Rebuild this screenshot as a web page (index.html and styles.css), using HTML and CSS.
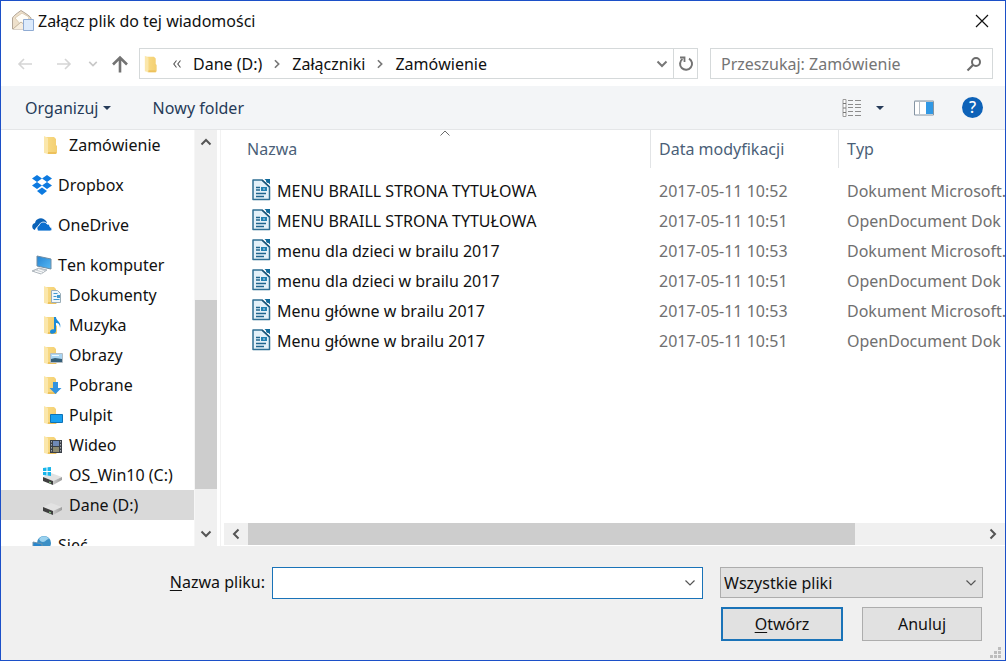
FILE: index.html
```html
<!DOCTYPE html>
<html lang="pl">
<head>
<meta charset="utf-8">
<title>Załącz plik do tej wiadomości</title>
<link rel="stylesheet" href="styles.css">
</head>
<body>
<svg class="defs" aria-hidden="true">
  <defs>
    <linearGradient id="gold" x1="0" x2="1" y1="0" y2="0"><stop offset="0" stop-color="#f9dc87"/><stop offset="1" stop-color="#f3cf72"/></linearGradient>
    <linearGradient id="screen" x1="0" x2="1" y1="0" y2="1"><stop offset="0" stop-color="#2583d2"/><stop offset="1" stop-color="#55b9f5"/></linearGradient>
    <linearGradient id="metal" x1="0" x2="1" y1="0" y2="0"><stop offset="0" stop-color="#c9c9c9"/><stop offset="1" stop-color="#9c9c9c"/></linearGradient>
  </defs>
  <symbol id="folder" viewBox="0 0 22 22">
    <path d="M3 3h9l2 2v6l1 1v7l-1 1H5z" fill="url(#gold)"/>
    <path d="M2 2l4 2v16l-4-1z" fill="#fbe7ab"/>
    <path d="M6 18h8v2H6z" fill="#edc15c"/>
  </symbol>
  <symbol id="drive" viewBox="0 0 22 22">
    <path d="M1 13l8-4 11 4-9 4z" fill="#e2e2e2"/>
    <path d="M1 13l10 4v4L1 17z" fill="#3f3f3f"/>
    <path d="M11 17l9-4v3l-9 5z" fill="url(#metal)"/>
    <path d="M7 18l2 1" stroke="#8fdc8f" stroke-width="1"/>
  </symbol>
  <symbol id="doc" viewBox="0 0 20 24">
    <path d="M2 1h9l7.500 7v12.500H2z" fill="#e3f1f9" stroke="#2f6f94" stroke-width="1.500" stroke-linejoin="round"/>
    <path d="M11 1l7.500 7" stroke="#1c5578" stroke-width="1.500"/>
    <path d="M13.500 0H19v5.500z" fill="#116a9b"/><circle cx="17" cy="2" r="2" fill="#116a9b"/>
    <path d="M5 8.500h4M5 11h4M5 14.500h10M5 17.500h8" stroke="#1f658e" stroke-width="1.300"/>
    <path d="M10 8h6v4h-6z" fill="#2480b0"/><path d="M12 10h2" stroke="#b5dcee"/>
  </symbol>
  <symbol id="chev-down" viewBox="0 0 12 12"><path d="M1.500 3.500L6 8l4.500-4.500" fill="none" stroke="currentColor" stroke-width="2"/></symbol>
  <symbol id="chev-thin" viewBox="0 0 12 12"><path d="M1.500 3.500L6 8l4.500-4.500" fill="none" stroke="currentColor" stroke-width="1.200"/></symbol>
  <symbol id="chev-up" viewBox="0 0 12 12"><path d="M1.500 8.500L6 4l4.500 4.500" fill="none" stroke="currentColor" stroke-width="2"/></symbol>
  <symbol id="chev-left" viewBox="0 0 12 12"><path d="M8.500 1.500L4 6l4.500 4.500" fill="none" stroke="currentColor" stroke-width="2"/></symbol>
  <symbol id="chev-right" viewBox="0 0 12 12"><path d="M3.500 1.500L8 6l-4.500 4.500" fill="none" stroke="currentColor" stroke-width="2"/></symbol>
</svg>

<div class="window">
  <header class="titlebar">
    <svg class="app-icon" viewBox="0 0 24 24" aria-hidden="true">
      <path d="M1.500 9Q2 7 10 1.500 19 7 20 9v11H1.500z" fill="#eee0cb" stroke="#b3a698"/>
      <path d="M4 9l7-5 7 4-1 5-7 3z" fill="#fffdf8" stroke="#dccdb5"/>
      <path d="M2 20l8-7 9 7" fill="#f7eee0" stroke="#c4b49c"/>
      <path d="M12.500 10.500h10v11h-10z" fill="#dceafb" stroke="#8fabd3"/>
    </svg>
    <h1 class="title">Załącz plik do tej wiadomości</h1>
    <button class="plain close" type="button" aria-label="Zamknij"><svg width="14" height="14" viewBox="0 0 14 14"><path d="M1 1l12 12M13 1L1 13" stroke="#111" stroke-width="1.200"/></svg></button>
  </header>

  <nav class="navbar" aria-label="Nawigacja">
    <div class="history">
      <button class="plain" type="button" aria-label="Wstecz" disabled><svg width="16" height="14" viewBox="0 0 16 14"><path d="M15 7H2M7 2L2 7l5 5" fill="none" stroke="#d5d5d5" stroke-width="1.600"/></svg></button>
      <button class="plain" type="button" aria-label="Dalej" disabled><svg width="16" height="14" viewBox="0 0 16 14"><path d="M1 7h13M9 2l5 5-5 5" fill="none" stroke="#d5d5d5" stroke-width="1.600"/></svg></button>
      <button class="plain recent" type="button" aria-label="Ostatnie lokalizacje"><svg width="10" height="10"><use href="#chev-down"/></svg></button>
      <button class="plain" type="button" aria-label="W górę"><svg width="18" height="18" viewBox="0 0 18 18"><path d="M9 17.500V3M2 9.500L9 2.500l7 7" fill="none" stroke="#737373" stroke-width="2.600"/></svg></button>
    </div>
    <div class="address">
      <svg class="icon" aria-hidden="true"><use href="#folder"/></svg>
      <button class="plain more" type="button" aria-label="Wcześniejsze foldery"><svg width="8" height="8" viewBox="0 0 8 8"><path d="M3.500 .5L.8 4l2.700 3.500M7.500 .5L4.800 4l2.700 3.500" fill="none" stroke="#555" stroke-width="1.100"/></svg></button>
      <a class="crumb" href="#">Dane (D:)</a>
      <svg class="sep" aria-hidden="true"><use href="#chev-right"/></svg>
      <a class="crumb" href="#">Załączniki</a>
      <svg class="sep" aria-hidden="true"><use href="#chev-right"/></svg>
      <a class="crumb" href="#">Zamówienie</a>
      <button class="plain expand" type="button" aria-label="Poprzednie lokalizacje"><svg width="12" height="12"><use href="#chev-down"/></svg></button>
      <button class="plain refresh" type="button" aria-label="Odśwież"><svg width="16" height="16" viewBox="0 0 16 16"><path d="M11 2.600a6 6 0 1 1-6.500.4" fill="none" stroke="#737373" stroke-width="2"/><path d="M2 1.500h4.500V6" fill="none" stroke="#737373" stroke-width="1.800"/></svg></button>
    </div>
    <div class="search">
      <input class="search-input" type="search" placeholder="Przeszukaj: Zamówienie" aria-label="Przeszukaj: Zamówienie">
      <svg width="16" height="16" viewBox="0 0 16 16" aria-hidden="true"><circle cx="10" cy="6" r="4" fill="none" stroke="#6b6b6b" stroke-width="2"/><path d="M7 9l-5.500 5.500" stroke="#6b6b6b" stroke-width="2.200"/></svg>
    </div>
  </nav>

  <div class="toolbar">
    <button class="plain tool" type="button">Organizuj <svg width="8" height="4" viewBox="0 0 8 4"><path d="M0 0h8L4 4z" fill="currentColor"/></svg></button>
    <button class="plain tool" type="button">Nowy folder</button>
    <div class="tool-right">
      <button class="plain view" type="button" aria-label="Zmień widok"><svg width="20" height="18" viewBox="0 0 20 18"><path d="M1 .5h3v17H1z" fill="#fff" stroke="#9b9b9b"/><path d="M1 4.500h3M1 9h3M1 13.500h3" stroke="#777"/><path d="M6 1.500h5M13 1.500h6M6 5.500h5M13 5.500h6M6 8.500h5M13 8.500h6M6 12.500h5M13 12.500h6M6 16.500h5M13 16.500h6" stroke="#8c8c8c"/></svg></button>
      <button class="plain view-more" type="button" aria-label="Więcej opcji"><svg width="8" height="4" viewBox="0 0 8 4"><path d="M0 0h8L4 4z" fill="currentColor"/></svg></button>
      <button class="plain pane" type="button" aria-label="Okienko podglądu"><svg width="20" height="16" viewBox="0 0 20 16"><path d="M.5 1h19v14H.5z" fill="#fff" stroke="#8494a3"/><path d="M12 2h7v12h-7z" fill="#3098e4"/><path d="M5.500 2v12M.5 1.500h19" stroke="#b3bcc4"/></svg></button>
      <button class="help" type="button" aria-label="Pomoc">?</button>
    </div>
  </div>

  <main class="main">
    <aside class="sidebar">
      <div class="tree">
        <ul class="group">
          <li class="node child"><svg class="icon"><use href="#folder"/></svg>Zamówienie</li>
        </ul>
        <ul class="group">
          <li class="node"><svg class="icon" viewBox="0 0 22 22"><g fill="#0d7ae0"><path d="M6 1l5 3.500-5 3.500-5-3.500zM16 1l5 3.500-5 3.500-5-3.500zM6 8l5 3.500-5 3.500-5-3.500zM16 8l5 3.500-5 3.500-5-3.500z"/><path d="M6 17l5-3.500 5 3.500-5 4z"/></g></svg>Dropbox</li>
        </ul>
        <ul class="group">
          <li class="node"><svg class="icon" viewBox="0 0 22 22"><path d="M4 16a3.600 3.600 0 0 1 0-7 6 6 0 0 1 10-3 5 5 0 0 1 2 3c-6-2-9 2-9 4-2 0-3 2-3 3z" fill="#0a62b8"/><path d="M7.500 17a3 3 0 0 1 .5-5.500c1-4 6.500-4.500 8-1.500 2.500 0 3 2 3 3 3 1 2 4 0 4z" fill="#0b6fd0" stroke="#fff" stroke-width=".8"/></svg>OneDrive</li>
        </ul>
        <ul class="group">
          <li class="node"><svg class="icon" viewBox="0 0 22 22"><path d="M6 2l14 3v10L6 12z" fill="url(#screen)" stroke="#6f8ca3"/><path d="M1 17l7-3 8 2-6 4z" fill="#ccd2d7" stroke="#b0b8be"/><path d="M4 17l7 2M7 15.500l6 2" stroke="#fff"/></svg>Ten komputer</li>
          <li class="node child"><svg class="icon" viewBox="0 0 22 22"><use href="#folder"/><path d="M9.500 6.500h6l3 3v9h-9z" fill="#edf6fb" stroke="#9aaeb9"/><path d="M11.500 9.500h4M11.500 12.500h3M11.500 15.500h6" stroke="#3f98ce"/><path d="M15 11h3v3h-3z" fill="#3f98ce"/></svg>Dokumenty</li>
          <li class="node child"><svg class="icon" viewBox="0 0 22 22"><use href="#folder"/><path d="M12 3h2c0 4 6 5 4 11 0-4-2-5-4-5v8c0 3-6 4-6 1 0-2 2-3 4-2.500z" fill="#1a8ad8"/></svg>Muzyka</li>
          <li class="node child"><svg class="icon" viewBox="0 0 22 22"><use href="#folder"/><path d="M8.500 9.500h12v9h-12z" fill="#a9d5f3" stroke="#b4bcc2"/><path d="M9 15l4-1 7 1v3H9z" fill="#355f79"/><path d="M10 11.500h7" stroke="#eff8ff"/></svg>Obrazy</li>
          <li class="node child"><svg class="icon" viewBox="0 0 22 22"><use href="#folder"/><path d="M11 8h5v6h3.500l-6 6-6-6H11z" fill="#3293e0"/></svg>Pobrane</li>
          <li class="node child"><svg class="icon" viewBox="0 0 22 22"><use href="#folder"/><path d="M8.500 10.500h12v8h-12z" fill="#18a0f0" stroke="#0c73b8"/></svg>Pulpit</li>
          <li class="node child"><svg class="icon" viewBox="0 0 22 22"><use href="#folder"/><path d="M8 6h12v13H8z" fill="#3b4048"/><path d="M11 7h6v5h-6z" fill="#6f89b8"/><path d="M11 13h6v5h-6z" fill="#8c8a72"/><path d="M9.500 7v12M18.500 7v12" stroke="#a5aab0" stroke-dasharray="1.500 1.500"/></svg>Wideo</li>
          <li class="node child"><svg class="icon" viewBox="0 0 22 22"><use href="#drive"/><path d="M1 4l3.500-.5V7H1zM5.500 3.300L9 3v4H5.500zM1 8h3.500v3.500L1 11zM5.500 8H9v4l-3.500-.4z" fill="#18b5ea"/></svg>OS_Win10 (C:)</li>
          <li class="node child selected"><svg class="icon"><use href="#drive"/></svg>Dane (D:)</li>
        </ul>
        <ul class="group">
          <li class="node"><svg class="icon" viewBox="0 0 22 22"><circle cx="13" cy="9" r="7" fill="#3c8fc5"/><path d="M8 5c3-4 8-3 10 0-3 0-3 3-6 3-2 0-3-1-4-3z" fill="#9bd2ef"/><path d="M2 8l9 2v9l-9-3z" fill="#2786ce" stroke="#7293aa"/></svg>Sieć</li>
        </ul>
      </div>
      <div class="vscroll">
        <button class="plain arrow" type="button" aria-label="Przewiń w górę"><svg width="12" height="12"><use href="#chev-up"/></svg></button>
        <div class="vtrack"><div class="vthumb"></div></div>
        <button class="plain arrow" type="button" aria-label="Przewiń w dół"><svg width="12" height="12"><use href="#chev-down"/></svg></button>
      </div>
    </aside>

    <section class="files">
      <div class="table-area">
        <svg class="sort" viewBox="0 0 10 6" aria-hidden="true"><path d="M.5 5.500L5 1l4.500 4.500" fill="none" stroke="#6b6b6b"/></svg>
        <table class="table">
          <thead>
            <tr><th class="col-name" scope="col">Nazwa</th><th class="col-date" scope="col">Data modyfikacji</th><th scope="col">Typ</th></tr>
          </thead>
          <tbody>
            <tr><td><span class="file"><svg class="doc"><use href="#doc"/></svg>MENU BRAILL STRONA TYTUŁOWA</span></td><td>2017-05-11 10:52</td><td>Dokument Microsoft.</td></tr>
            <tr><td><span class="file"><svg class="doc"><use href="#doc"/></svg>MENU BRAILL STRONA TYTUŁOWA</span></td><td>2017-05-11 10:51</td><td>OpenDocument Dok</td></tr>
            <tr><td><span class="file"><svg class="doc"><use href="#doc"/></svg>menu dla dzieci w brailu 2017</span></td><td>2017-05-11 10:53</td><td>Dokument Microsoft.</td></tr>
            <tr><td><span class="file"><svg class="doc"><use href="#doc"/></svg>menu dla dzieci w brailu 2017</span></td><td>2017-05-11 10:51</td><td>OpenDocument Dok</td></tr>
            <tr><td><span class="file"><svg class="doc"><use href="#doc"/></svg>Menu główne w brailu 2017</span></td><td>2017-05-11 10:53</td><td>Dokument Microsoft.</td></tr>
            <tr><td><span class="file"><svg class="doc"><use href="#doc"/></svg>Menu główne w brailu 2017</span></td><td>2017-05-11 10:51</td><td>OpenDocument Dok</td></tr>
          </tbody>
        </table>
      </div>
      <div class="hscroll">
        <button class="plain arrow" type="button" aria-label="Przewiń w lewo"><svg width="12" height="12"><use href="#chev-left"/></svg></button>
        <div class="htrack"><div class="hthumb"></div></div>
        <button class="plain arrow" type="button" aria-label="Przewiń w prawo"><svg width="12" height="12"><use href="#chev-right"/></svg></button>
      </div>
    </section>
  </main>

  <footer class="footer">
    <label class="name-label" for="filename"><u>N</u>azwa pliku:</label>
    <div class="combo">
      <input class="combo-input" id="filename" type="text">
      <button class="plain combo-button" type="button" aria-label="Poprzednie nazwy"><svg width="12" height="12"><use href="#chev-thin"/></svg></button>
    </div>
    <div class="filter">
      <select class="filter-select" aria-label="Typ pliku"><option>Wszystkie pliki</option></select>
      <svg class="filter-chevron" aria-hidden="true"><use href="#chev-thin"/></svg>
    </div>
    <div class="actions">
      <button class="button primary" type="button"><u>O</u>twórz</button>
      <button class="button" type="button">Anuluj</button>
    </div>
    <svg class="grip" viewBox="0 0 12 12" aria-hidden="true"><path d="M8 0h3v3H8zM4 4h3v3H4zM8 4h3v3H8zM0 8h3v3H0zM4 8h3v3H4zM8 8h3v3H8z" fill="#bdbdbd"/></svg>
  </footer>
</div>
</body>
</html>
```
FILE: styles.css
```css
* { box-sizing: border-box; }

body {
  margin: 0;
  font: 16px/30px "Noto Sans", "Open Sans", sans-serif;
  font-kerning: none;
  color: #111;
}

button, input, select { font: inherit; font-kerning: inherit; color: inherit; }
svg { display: block; flex: none; }
ul { list-style: none; margin: 0; padding: 0; }
u { text-underline-offset: 2px; }

.defs { position: absolute; width: 0; height: 0; }

.plain {
  display: flex;
  align-items: center;
  justify-content: center;
  padding: 0;
  border: 0;
  background: none;
}

.window {
  display: flex;
  flex-direction: column;
  height: 100vh;
  border: 1px solid #1c50c8;
  background: #fff;
  overflow: hidden;
}

/* Title bar */
.titlebar {
  display: flex;
  align-items: center;
  gap: 3px;
  height: 40px;
  padding: 0 16px 0 10px;
}
.app-icon { width: 24px; height: 24px; }
.title { flex: 1; margin: 0; font-size: 16px; font-weight: 400; }

/* Navigation */
.navbar {
  display: flex;
  gap: 12px;
  padding: 7px 12px 7px 16px;
}
.history { display: flex; align-items: center; gap: 23px; width: 110px; }
.history .recent { color: #c8c8c8; margin: 0 -10px 0 -7px; }
.address {
  display: flex;
  align-items: center;
  flex: 1;
  height: 31px;
  border: 1px solid #d5d9da;
  line-height: 28px;
}
.address .icon { margin-left: 3px; width: 20px; height: 20px; }
.more { width: 28px; }
.crumb { color: inherit; text-decoration: none; white-space: nowrap; }
.address .crumb:first-of-type { margin-left: 2px; }
.sep { width: 10px; height: 10px; margin: 0 10px; color: #777; }
.expand { margin-left: auto; color: #777; }
.refresh {
  width: 24px;
  height: 29px;
  margin-left: 5px;
  border-left: 1px solid #d5d9da;
}
.search {
  display: flex;
  align-items: center;
  width: 283px;
  height: 31px;
  padding: 0 10px;
  border: 1px solid #d5d9da;
}
.search-input {
  flex: 1;
  min-width: 0;
  padding: 0;
  border: 0;
  outline: 0;
  background: none;
}
.search-input::placeholder { color: #757575; opacity: 1; }

/* Toolbar */
.toolbar {
  display: flex;
  align-items: center;
  gap: 41px;
  height: 44px;
  padding: 0 22px 0 24px;
  border-bottom: 1px solid #e4e6e8;
  background: #f3f5f7;
  color: #263b59;
}
.tool { gap: 5px; }
.tool-right { display: flex; align-items: center; margin-left: auto; }
.view-more { margin: 0 30px 0 14px; }
.pane { margin-right: 28px; }
.help {
  width: 21px;
  height: 21px;
  padding: 0;
  border: 0;
  border-radius: 50%;
  background: #0d62b8;
  color: #fff;
  font-weight: 500;
  line-height: 21px;
}

/* Main area */
.main { display: flex; flex: 1; min-height: 0; }
.sidebar {
  display: flex;
  width: 220px;
  padding-right: 3px;
  border-right: 1px solid #f2f2f2;
}
.tree {
  display: flex;
  flex-direction: column;
  gap: 10px;
  width: 193px;
  overflow: hidden;
}
.node {
  display: flex;
  align-items: center;
  gap: 5px;
  height: 30px;
  padding-left: 30px;
  white-space: nowrap;
}
.child { padding-left: 41px; }
.selected { background: #d9d9d9; }
.icon { width: 22px; height: 22px; }

.vscroll {
  display: flex;
  flex-direction: column;
  width: 23px;
  background: #f0f0f0;
  border-left: 1px solid #f6f6f6;
}
.arrow { color: #555; height: 24px; width: 22px; }
.vtrack { display: flex; flex-direction: column; flex: 1; }
.vtrack::before { content: ""; flex: 146; }
.vthumb { flex: 189; background: #cdcdcd; }
.vtrack::after { content: ""; flex: 33; }

.files { display: flex; flex-direction: column; flex: 1; min-width: 0; }
.table-area { position: relative; flex: 1; overflow: hidden; }
.sort { position: absolute; left: 219px; top: 0; width: 10px; height: 6px; }
.table {
  width: 100%;
  table-layout: fixed;
  border-collapse: separate;
  border-spacing: 0;
}
.table th {
  height: 38px;
  padding: 0 0 0 8px;
  border-left: 1px solid #e2e4e6;
  color: #4b5f78;
  font-weight: 400;
  text-align: left;
}
.table .col-name { width: 429px; padding-left: 26px; border-left: 0; }
.table .col-date { width: 188px; }
.table tbody::before { content: ""; display: block; height: 8px; }
.table td {
  height: 30px;
  padding: 0 0 0 9px;
  color: #707070;
  white-space: nowrap;
  overflow: hidden;
}
.table td:first-child { padding-left: 30px; color: #111; }
.file { display: flex; align-items: center; gap: 6px; }
.doc { width: 20px; height: 24px; }

.hscroll {
  display: flex;
  height: 22px;
  margin: 0 0 1px 3px;
  background: #f0f0f0;
}
.hscroll .arrow { width: 24px; height: 22px; }
.htrack { display: flex; flex: 1; }
.hthumb { flex: 607; background: #cdcdcd; }
.htrack::after { content: ""; flex: 126; }

/* Footer */
.footer {
  position: relative;
  display: grid;
  grid-template-columns: 264px 1fr 263px;
  gap: 8px 0;
  padding: 21px 22px 19px 0;
  background: #f0f0f0;
}
.name-label { text-align: right; }
.combo {
  display: flex;
  height: 32px;
  margin: 0 17px 0 7px;
  border: 1px solid #1a73b8;
  background: #fff;
}
.combo-input { flex: 1; min-width: 0; border: 0; outline: 0; background: none; }
.combo-button { width: 24px; color: #555; }
.filter { position: relative; }
.filter-select {
  appearance: none;
  width: 100%;
  height: 31px;
  padding: 0 24px 0 3px;
  border: 1px solid #adadad;
  border-radius: 0;
  background: #e1e1e1;
}
.filter-chevron {
  position: absolute;
  right: 6px;
  top: 10px;
  width: 12px;
  height: 12px;
  color: #555;
  pointer-events: none;
}
.actions { grid-column: 3; display: flex; gap: 19px; padding: 0 1px; }
.button {
  flex: 1;
  height: 34px;
  padding: 0;
  border: 1px solid #adadad;
  background: #e1e1e1;
}
.primary { border: 2px solid #1a73b8; }
.grip { position: absolute; right: 3px; bottom: 1px; width: 12px; height: 12px; }
```
